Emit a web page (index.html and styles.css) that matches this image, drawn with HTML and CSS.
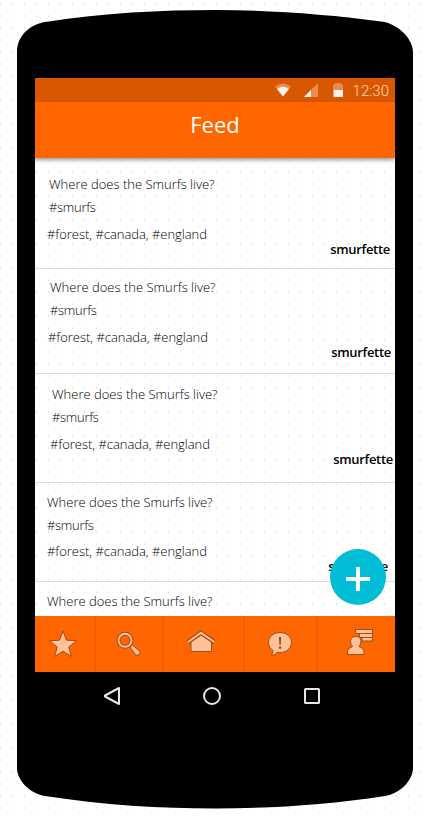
FILE: index.html
```html
<!DOCTYPE html>
<html lang="en">
<head>
<meta charset="utf-8">
<title>Feed</title>
<link rel="stylesheet" href="styles.css">
</head>
<body>
<div class="phone">
  <main class="screen">
    <div class="status">
      <svg class="signals" width="72" height="16" viewBox="0 0 72 16">
        <path d="M0 3.5Q8-2.500 16 3.500L8 13.500Z" fill="#e98d4e"/>
        <path d="M2 6Q8 1 14 6L8 13.500Z" fill="#fff3eb"/>
        <path d="M43 0V14H29Z" fill="#e98d4e"/>
        <path d="M36 7V14H29Z" fill="#fff3eb"/>
        <path d="M58 7V2Q58 1 60 1V0H66V1Q68 1 68 2V7Z" fill="#e98d4e"/>
        <path d="M58.500 7H68V14H58.500Z" fill="#fff3eb"/>
      </svg>
      <span class="clock">12:30</span>
    </div>
    <header class="appbar"><h1>Feed</h1></header>
    <section class="feed">
      <article class="post post-a">
        <p class="q">Where does the Smurfs live?</p><p class="topic">#smurfs</p>
        <p class="tags">#forest, #canada, #england</p><p class="user">smurfette</p>
      </article>
      <article class="post post-b">
        <p class="q">Where does the Smurfs live?</p><p class="topic">#smurfs</p>
        <p class="tags">#forest, #canada, #england</p><p class="user">smurfette</p>
      </article>
      <article class="post post-c">
        <p class="q">Where does the Smurfs live?</p><p class="topic">#smurfs</p>
        <p class="tags">#forest, #canada, #england</p><p class="user">smurfette</p>
      </article>
      <article class="post post-d">
        <p class="q">Where does the Smurfs live?</p><p class="topic">#smurfs</p>
        <p class="tags">#forest, #canada, #england</p><p class="user">smurfette</p>
      </article>
      <article class="post post-e">
        <p class="q">Where does the Smurfs live?</p>
      </article>
    </section>
    <nav class="tabs">
      <a class="tab star"><svg width="30" height="30" viewBox="0 0 30 30"><path d="M15 2L18.500 11.200L28.500 11.700L20.800 18L23.300 27.500L15 22.200L6.700 27.500L9.200 18L1.500 11.700L11.500 11.200Z"/></svg></a>
      <a class="tab"><svg width="30" height="30" viewBox="0 0 30 30"><path d="M17.500 17.500L19.500 16L26.500 22Q28 24 26 25.500Q24.500 27 22.500 25.500L18 19.500Z"/><circle cx="12" cy="11.300" r="6.500" class="rim"/><circle cx="12" cy="11.300" r="6.500" class="lens"/></svg></a>
      <a class="tab home"><svg width="32" height="30" viewBox="0 0 32 30"><path d="M6 12.500L16 6L26.500 12.500V22.500H6Z"/><path class="roof" d="M3 13L16 3.800L29.500 13"/><path class="rooftop" d="M3 13L16 3.800L29.500 13"/></svg></a>
      <a class="tab"><svg width="30" height="30" viewBox="0 0 30 30"><path d="M15 3.500C8 3.500 3.500 8 3.500 13.500C3.500 17 5.500 20 8 21.500C8 23.500 7 25 6.500 26.500C9.500 26 11.500 24.500 12 23.200C20 25 26.500 20 26.500 13.500C26.500 8 22 3.500 15 3.500Z"/><path class="mark" d="M13.900 8H16.200L15.700 16H14.400ZM13.900 17.500H16.200V19.700H13.900Z"/></svg></a>
      <a class="tab people"><svg width="30" height="30" viewBox="0 0 30 30"><path d="M10.500 .5H27.500V4.500H10.500ZM14.500 4.500H27.500V8.500H14.500ZM17 8.500H27.500V12H17Z"/><path d="M2.500 25.500V22Q3 19 7.500 17.500Q5.500 15.500 5.500 12Q5.500 7.500 10.800 7.500Q16 7.500 16 12Q16 15.500 14 17.500Q18.500 19 19 22V25.500Z"/></svg></a>
    </nav>
    <button class="fab" aria-label="Add"><svg width="24" height="24" viewBox="0 0 24 24"><path d="M10 0h4v10h10v4H14v10h-4V14H0v-4h10z" fill="#fff"/></svg></button>
  </main>
  <footer class="softkeys">
    <svg width="18" height="20" viewBox="0 0 18 20"><path d="M16 2V18L2 10.500V9.500Z"/></svg>
    <svg width="20" height="20" viewBox="0 0 20 20"><circle cx="10" cy="10" r="8"/></svg>
    <svg width="18" height="18" viewBox="0 0 18 18"><rect x="2" y="2" width="14" height="14" rx=".5"/></svg>
  </footer>
</div>
</body>
</html>
```
FILE: styles.css
```css
* { box-sizing: border-box; }
body, h1, p { margin: 0; }
body {
  height: 819px;
  overflow: hidden;
  padding: 10px 0 0 17px;
  font-family: "Open Sans", sans-serif;
}
body, .screen {
  background: conic-gradient(from 90deg at 1px 2px, transparent 180deg, #e2e2e2 180deg 270deg, transparent 270deg) 0 3px / 12px 12px #fff;
}
.phone {
  width: 396px;
  height: 799px;
  padding: 68px 18px 0;
  background: #000;
  clip-path: path("M0 42C0 24 16 13 30 11.800C85 3 145 0 198 0C251 0 310 4 366 11.800C380 14 396 28 396 42V758C396 771 382 784 368 786C310 795 251 798.500 198 798.500C145 798.500 85 795 28 786C14 784 0 771 0 758Z");
}
.screen {
  position: relative;
  display: flex;
  flex-direction: column;
  width: 360px;
  height: 594px;
  overflow: hidden;
  background-position: -35px -75px;
}
.status {
  display: flex;
  justify-content: flex-end;
  align-items: center;
  gap: 6px;
  flex: 0 0 24px;
  padding-right: 6px;
  background: #d95700;
}
.signals { margin-top: 2px; }
.clock {
  font: 300 15px/22px Roboto, sans-serif;
  color: #ffd9bf;
  padding-top: 2px;
}
.appbar {
  z-index: 1;
  flex: 0 0 56px;
  background: #f60;
  box-shadow: 0 2px 4px rgba(0, 0, 0, .4);
  text-align: center;
}
h1 {
  font-size: 22px;
  font-weight: 400;
  line-height: 44px;
  color: #fff;
}
.feed { flex: 1; min-height: 0; overflow: hidden; }
.post {
  border-bottom: 1px solid #dcdcdc;
  font-size: 13px;
  font-weight: 300;
  line-height: 23px;
  color: #000;
  white-space: nowrap;
}
.topic { letter-spacing: -.3px; }
.tags { margin-top: 4px; letter-spacing: -.03px; }
.user {
  margin-top: -8px;
  text-align: right;
  font-weight: 600;
  letter-spacing: -.3px;
}
.post-a { height: 111px; padding: 15px 5px 0 14px; }
.post-a .tags, .post-b .tags, .post-c .tags { margin-left: -2px; }
.post-b { height: 105px; padding: 7px 4px 0 15px; }
.post-c { height: 109px; padding: 9px 2px 0 17px; }
.post-d { height: 99px; padding: 8px 7px 0 12px; }
.post-d .tags { margin-top: 3px; }
.post-e { padding: 8px 0 0 12px; border: 0; }
.tabs {
  display: grid;
  grid-template-columns: 59px 68px 81px 73px 79px;
  flex: 0 0 56px;
  background: #f60;
}
.tab { display: flex; align-items: center; justify-content: center; }
.tab + .tab { box-shadow: inset 2px 0 #ed5f00; }
.star { padding-right: 3px; }
.home { padding-right: 4px; }
.people { padding-left: 8px; }
.tab svg { fill: #ffc19a; stroke: #a34c14; stroke-width: 1; }
.tab .rim { fill: none; stroke-width: 4; }
.tab .lens { fill: none; stroke: #ffc19a; stroke-width: 2; }
.tab .roof { fill: none; stroke-width: 4.500; }
.tab .rooftop { fill: none; stroke: #ffc19a; stroke-width: 2; }
.tab .mark { fill: #a34c14; stroke: none; }
.fab {
  position: absolute;
  right: 9px;
  bottom: 67px;
  display: grid;
  place-items: center;
  width: 56px;
  height: 56px;
  padding: 4px 0 0;
  border: 0;
  border-radius: 50%;
  background: #00bcd4;
}
.softkeys {
  display: flex;
  align-items: center;
  justify-content: space-between;
  height: 48px;
  padding: 0 74px 0 68px;
}
.softkeys svg { fill: none; stroke: #e6e6e6; stroke-width: 2; stroke-linejoin: round; }
```
